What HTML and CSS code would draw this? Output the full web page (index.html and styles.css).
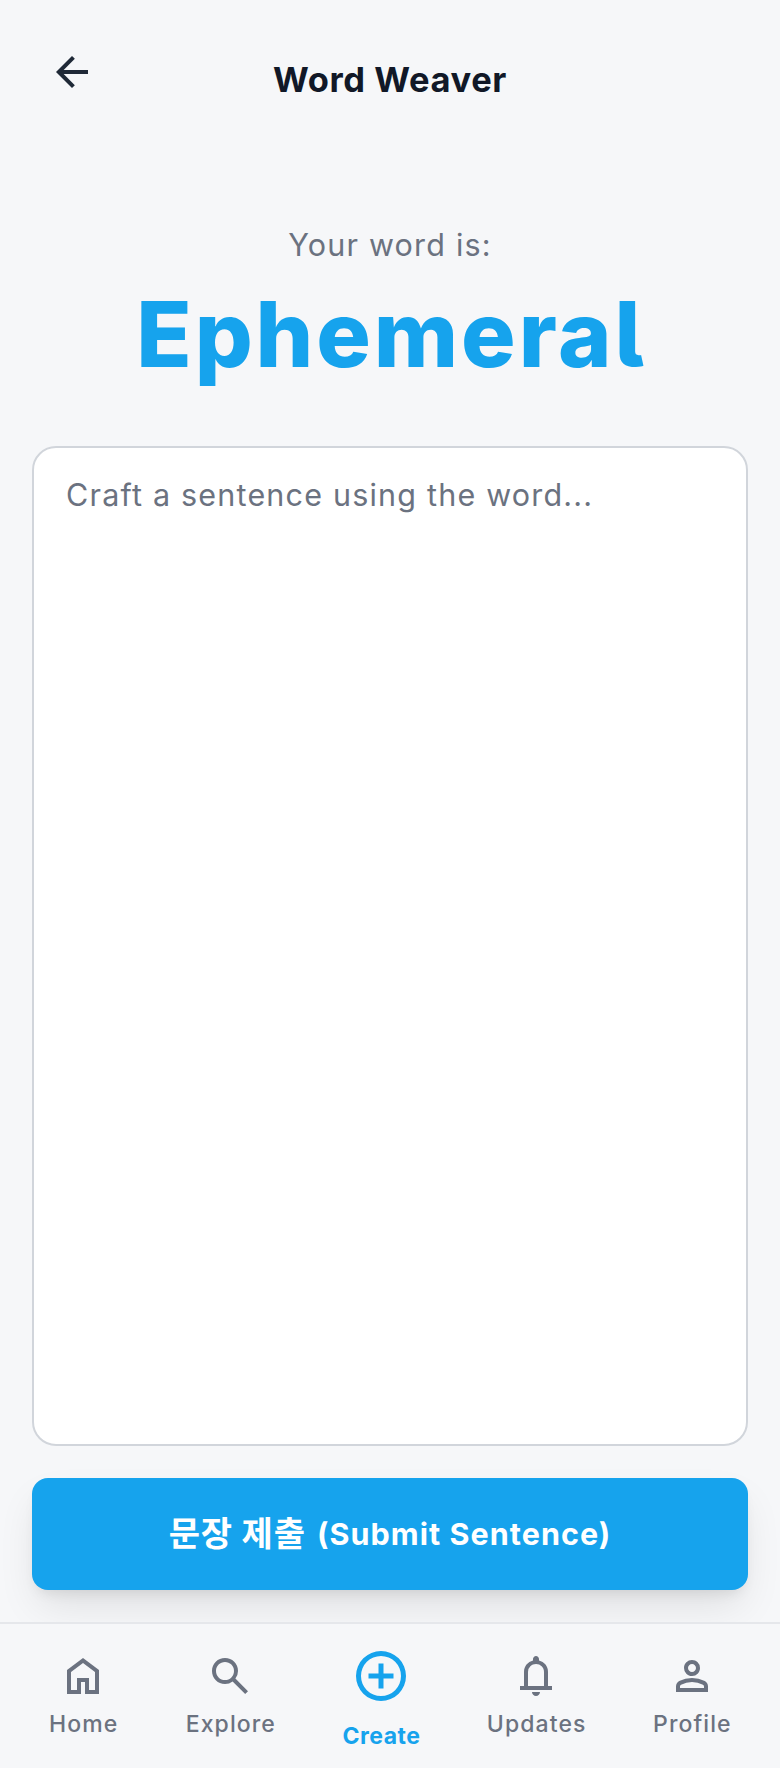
FILE: index.html
```html
<!DOCTYPE html>
<html lang="en">
<head>
<meta charset="utf-8">
<title>Word Weaver</title>
<link rel="stylesheet" href="styles.css">
</head>
<body>
<div class="app">
  <header class="header">
    <button class="back" aria-label="Back">
      <svg class="icon" viewBox="0 0 24 24"><path d="M7.825 13l5.6 5.6L12 20l-8-8 8-8 1.425 1.4-5.6 5.6H20v2H7.825z"/></svg>
    </button>
    <h1 class="title">Word Weaver</h1>
  </header>
  <main class="main">
    <section class="prompt">
      <p class="prompt-label">Your word is:</p>
      <h2 class="word">Ephemeral</h2>
    </section>
    <textarea class="sentence" placeholder="Craft a sentence using the word..."></textarea>
    <button class="submit"><span class="submit-ko">문장 제출</span><span class="submit-en">(Submit Sentence)</span></button>
  </main>
  <nav class="nav">
    <a class="tab home">
      <svg class="icon" viewBox="0 0 24 24"><path d="M6 19h3v-6h6v6h3v-9l-6-4.5L6 10v9zm-2 2V9l8-6 8 6v12h-7v-6h-2v6H4z"/></svg>
      <span>Home</span>
    </a>
    <a class="tab explore">
      <svg class="icon" viewBox="0 0 24 24"><path d="M19.6 21l-6.3-6.3A6.1 6.1 0 0 1 9.5 16C7.68 16 6.14 15.37 4.89 14.11 3.63 12.86 3 11.32 3 9.5s.63-3.36 1.89-4.61C6.14 3.63 7.68 3 9.5 3s3.36.63 4.61 1.89C15.37 6.14 16 7.68 16 9.5a6.1 6.1 0 0 1-1.3 3.8l6.3 6.3-1.4 1.4zM9.5 14c1.25 0 2.31-.44 3.19-1.31.87-.88 1.31-1.94 1.31-3.19s-.44-2.31-1.31-3.19C11.81 5.44 10.75 5 9.5 5s-2.31.44-3.19 1.31C5.44 7.19 5 8.25 5 9.5s.44 2.31 1.31 3.19c.88.87 1.94 1.31 3.19 1.31z"/></svg>
      <span>Explore</span>
    </a>
    <a class="tab create">
      <svg class="icon" viewBox="0 0 24 24"><path d="M11 17h2v-4h4v-2h-4V7h-2v4H7v2h4v4zm1 5A10 10 0 1 1 12 2a10 10 0 0 1 0 20zm0-2a8 8 0 1 0 0-16 8 8 0 0 0 0 16z"/></svg>
      <span>Create</span>
    </a>
    <a class="tab updates">
      <svg class="icon" viewBox="0 0 24 24"><path d="M4 19v-2h2v-7c0-1.38.42-2.61 1.25-3.69A5.87 5.87 0 0 1 10.5 4.2v-.7c0-.42.15-.77.44-1.06.29-.29.64-.44 1.06-.44s.77.15 1.06.44c.29.29.44.64.44 1.06v.7c1.33.33 2.42 1.04 3.25 2.11C17.58 7.39 18 8.62 18 10v7h2v2H4zm8 3c-.55 0-1.02-.2-1.41-.59A1.93 1.93 0 0 1 10 20h4c0 .55-.2 1.02-.59 1.41-.39.39-.86.59-1.41.59zm-4-5h8v-7c0-1.1-.39-2.04-1.17-2.83A3.86 3.86 0 0 0 12 6c-1.1 0-2.04.39-2.83 1.17A3.86 3.86 0 0 0 8 10v7z"/></svg>
      <span>Updates</span>
    </a>
    <a class="tab profile">
      <svg class="icon" viewBox="0 0 24 24"><path d="M12 12c-1.1 0-2.04-.39-2.83-1.17A3.86 3.86 0 0 1 8 8c0-1.1.39-2.04 1.17-2.83A3.86 3.86 0 0 1 12 4c1.1 0 2.04.39 2.83 1.17A3.86 3.86 0 0 1 16 8c0 1.1-.39 2.04-1.17 2.83A3.86 3.86 0 0 1 12 12zm-8 8v-2.8c0-.57.15-1.09.44-1.56.29-.48.68-.84 1.16-1.09A14.8 14.8 0 0 1 12 13a14.8 14.8 0 0 1 6.4 1.55c.48.25.87.61 1.16 1.09.29.47.44.99.44 1.56V20H4zm2-2h12v-.8a.97.97 0 0 0-.5-.85A12.9 12.9 0 0 0 12 15a12.9 12.9 0 0 0-5.5 1.35.97.97 0 0 0-.5.85v.8zm6-8c.55 0 1.02-.2 1.41-.59.39-.39.59-.86.59-1.41s-.2-1.02-.59-1.41A1.93 1.93 0 0 0 12 6c-.55 0-1.02.2-1.41.59C10.2 6.98 10 7.45 10 8s.2 1.02.59 1.41c.39.39.86.59 1.41.59z"/></svg>
      <span>Profile</span>
    </a>
  </nav>
</div>
</body>
</html>
```
FILE: styles.css
```css
* { box-sizing: border-box; margin: 0; padding: 0; }
body {
  background: #f6f7f9;
  font-family: Inter, "Noto Sans CJK KR", sans-serif;
  color: #111827;
}
button { border: 0; background: none; font: inherit; color: inherit; }
.app { display: flex; flex-direction: column; height: 1768px; }
.icon { display: block; width: 48px; height: 48px; fill: currentColor; }

.header {
  display: grid;
  grid-template-columns: 80px 1fr 80px;
  padding: 32px 32px 0;
  height: 160px;
}
.back { width: 80px; height: 80px; padding: 16px; color: #1f2937; }
.title {
  padding-top: 25px;
  text-align: center;
  font-size: 34.5px;
  font-weight: 700;
  line-height: 46px;
  letter-spacing: .6px;
  white-space: nowrap;
}

.main { flex: 1; display: flex; flex-direction: column; padding: 0 32px 32px; }
.prompt { height: 286px; padding-top: 61px; text-align: center; }
.prompt-label {
  font-size: 30.5px;
  line-height: 48px;
  letter-spacing: 1.2px;
  color: #6b7280;
}
.word {
  padding-top: 17px;
  padding-left: 3px;
  font-size: 91px;
  font-weight: 850;
  line-height: 96px;
  letter-spacing: 2.9px;
  font-feature-settings: "cv05";
  white-space: nowrap;
  color: #16a3ed;
}
.sentence {
  display: block;
  width: 100%;
  height: 1000px;
  padding: 21px 32px;
  border: 2px solid #d1d5db;
  border-radius: 24px;
  background: #fff;
  font-family: Inter, sans-serif;
  font-size: 30.5px;
  line-height: 52px;
  letter-spacing: 1.2px;
  resize: none;
}
.sentence::placeholder { color: #6b7280; opacity: 1; }
.submit {
  display: flex;
  justify-content: center;
  align-items: center;
  gap: 11px;
  height: 112px;
  margin-top: 32px;
  padding-bottom: 2px;
  border-radius: 16px;
  background: #16a3ed;
  color: #fff;
  font-size: 30.5px;
  font-weight: 700;
  letter-spacing: 1.05px;
  white-space: nowrap;
  box-shadow: 0 20px 40px -6px rgba(0, 0, 0, .1), 0 8px 14px -6px rgba(0, 0, 0, .1);
}
.submit-ko {
  padding-bottom: 3px;
  font-family: "Noto Sans CJK KR", sans-serif;
  font-size: 34px;
  line-height: 48px;
  letter-spacing: .9px;
}

.nav {
  position: relative;
  display: flex;
  justify-content: space-around;
  height: 146px;
  padding: 28px 16px 0;
  border-top: 2px solid #e5e7eb;
  background: #f6f7f9;
}
.tab {
  display: flex;
  flex-direction: column;
  align-items: center;
  color: #6b7280;
  font-size: 23px;
  font-weight: 500;
  line-height: 32px;
  letter-spacing: 1.1px;
  white-space: nowrap;
}
.tab span { margin: 8px -1.1px 0 0; }
.home { width: 68px; }
.explore { width: 94px; }
.create { width: 76px; color: #16a3ed; font-weight: 700; letter-spacing: .5px; }
.create .icon { width: 60px; height: 60px; margin-top: -6px; }
.create span { margin: 14px 0 0; }
.updates { width: 101px; }
.profile { width: 78px; }
```
